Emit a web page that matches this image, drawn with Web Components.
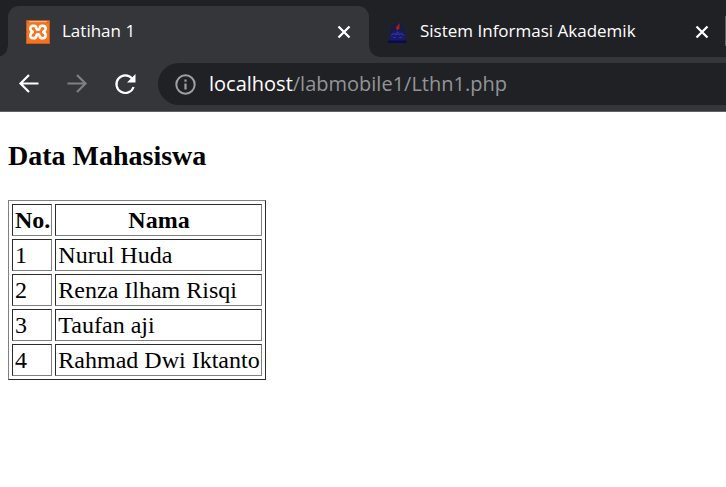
<!DOCTYPE html>
<html lang="id">
<head>
<meta charset="utf-8">
<title>Latihan 1</title>
<style>
  body { margin: 0; background: #fff; }
</style>
</head>
<body>
<browser-window>
  <browser-tab slot="tab" active><xampp-icon slot="icon"></xampp-icon>Latihan 1</browser-tab>
  <browser-tab slot="tab"><campus-icon slot="icon"></campus-icon>Sistem Informasi Akademik</browser-tab>
  <browser-toolbar slot="toolbar" host="localhost" path="/labmobile1/Lthn1.php"></browser-toolbar>
  <student-page></student-page>
</browser-window>

<script>
class BaseElement extends HTMLElement {
  constructor() {
    super();
    this.attachShadow({ mode: 'open' }).innerHTML = this.constructor.markup;
  }
}

customElements.define('browser-window', class extends BaseElement {
  static markup = `
    <style>
      :host { display: block; font-family: "Open Sans", "Noto Sans", sans-serif; }
      nav { display: grid; grid-template-columns: 361fr 356fr 1px; align-items: end;
            background: #202124; padding: 6px 0 0 8px; }
      nav::after { content: ""; height: 30px; background: #5f6368; align-self: center; margin-bottom: 1px; }
    </style>
    <nav aria-label="Tab"><slot name="tab"></slot></nav>
    <slot name="toolbar"></slot>
    <slot></slot>`;
});

customElements.define('browser-tab', class extends BaseElement {
  static markup = `
    <style>
      :host { display: flex; align-items: center; gap: 12px; height: 51px; min-width: 0;
              box-sizing: border-box; padding: 0 14px 0 18px; color: #fff;
              font-size: 17px; line-height: 24px; position: relative; }
      :host([active]) { background: #35363a; border-radius: 11px 11px 0 0; padding-right: 16px; }
      :host([active])::before, :host([active])::after {
        content: ""; position: absolute; bottom: 0; width: 10px; height: 10px; }
      :host([active])::before { right: 100%; background: radial-gradient(circle at 0 0, #0000 9px, #35363a 10px); }
      :host([active])::after { left: 100%; background: radial-gradient(circle at 100% 0, #0000 9px, #35363a 10px); }
      .title { flex: 1; min-width: 0; overflow: hidden; white-space: nowrap; padding-bottom: 2px; }
      button { display: flex; padding: 2px; border: 0; background: none; color: #fff; }
      svg { display: block; }
    </style>
    <slot name="icon"></slot>
    <span class="title"><slot></slot></span>
    <button aria-label="Tutup tab"><svg width="14" height="14" viewBox="0 0 14 14"><path d="M1.500 1.500l11 11M12.500 1.500l-11 11" stroke="currentColor" stroke-width="2.300"/></svg></button>`;
});

customElements.define('xampp-icon', class extends BaseElement {
  static markup = `
    <style>:host { display: block; flex: none; } svg { display: block; }</style>
    <svg width="24" height="24" viewBox="0 0 24 24" aria-hidden="true">
      <defs><linearGradient id="g" x2="0" y2="1"><stop stop-color="#d66a2b"/><stop offset=".2" stop-color="#f47b25"/><stop offset="1" stop-color="#f9701c"/></linearGradient></defs>
      <rect width="24" height="24" rx="1.5" fill="url(#g)"/>
      <rect x=".5" y=".5" width="23" height="23" rx="1" fill="none" stroke="#c95b20"/>
      <path d="M3 1.700h18" stroke="#fbc49b"/>
      <path d="M12 9.800c-1.600 0-1.400-.8-1.600-1.800C10 4.800 4.300 5 4.300 8.600c0 1.700 1 2.600 2.500 3.400-1.500.8-2.500 1.700-2.500 3.400 0 3.600 5.700 3.800 6.100.6.200-1 0-1.800 1.600-1.800s1.400.8 1.600 1.800c.4 3.200 6.100 3 6.100-.6 0-1.700-1-2.600-2.500-3.400 1.500-.8 2.500-1.700 2.500-3.400 0-3.600-5.700-3.800-6.100-.6-.2 1 0 1.800-1.600 1.800z" fill="none" stroke="#fff" stroke-width="2.600" stroke-linejoin="round"/>
    </svg>`;
});

customElements.define('campus-icon', class extends BaseElement {
  static markup = `
    <style>:host { display: block; flex: none; } svg { display: block; }</style>
    <svg width="21" height="24" viewBox="0 0 21 24" aria-hidden="true">
      <circle cx="10.500" cy="11.500" r="9" fill="#1b1c38" stroke="#212242" stroke-width="1.500" stroke-dasharray="2 1"/>
      <path d="M3.500 20v-6l3-3 4-1.500 4 1.500 3 3v6z" fill="#181870"/>
      <path d="M1 20.500h18.500v2.500H1z" fill="#09095c"/>
      <path d="M4 15.500l2.500-2 2 1 2-2.500 2 2.500 2-1 2.500 2M6 17.500h3m3 0h3M8 14.500h5" fill="none" stroke="#30338a" stroke-width="1.200"/>
      <path d="M10 10c-2-2-.5-3.500.5-4.500L12.500 3v5.500L11 10z" fill="#9c2024"/>
    </svg>`;
});

customElements.define('browser-toolbar', class extends BaseElement {
  static markup = `
    <style>
      :host { display: flex; align-items: center; padding: 6px 0; background: #35363a; border-bottom: 1px solid #5f6368; }
      .nav { display: flex; gap: 24px; padding: 0 21px 0 17px; }
      button { display: flex; padding: 0; border: 0; background: none; color: #fff; }
      button:disabled { color: #7f8083; }
      svg { display: block; flex: none; }
      form { flex: 1; min-width: 0; display: flex; align-items: center; gap: 12px; height: 42px;
             padding-left: 16px; border-radius: 21px 0 0 21px; background: #202124; color: #9aa0a6; }
      .address { flex: 1; font-size: 20px; line-height: 28px; white-space: nowrap; overflow: hidden; color: #929598; outline: 0; }
      .host { color: #fff; }
    </style>
    <div class="nav">
      <button aria-label="Kembali"><svg width="24" height="24" viewBox="0 0 24 24"><path d="M21.500 11.500H3.500M12 3l-8.500 8.500L12 20" fill="none" stroke="currentColor" stroke-width="2.200"/></svg></button>
      <button aria-label="Maju" disabled><svg width="24" height="24" viewBox="0 0 24 24"><path d="M2.500 11.500h18M12 3l8.500 8.500L12 20" fill="none" stroke="currentColor" stroke-width="2.200"/></svg></button>
      <button aria-label="Muat ulang"><svg width="24" height="24" viewBox="0 0 24 24"><path d="M20.600 15a8.800 8.800 0 1 1-1.500-8.400" fill="none" stroke="currentColor" stroke-width="2.200"/><path d="M22.500 2v8.500H14z" fill="currentColor"/></svg></button>
    </div>
    <form>
      <svg width="23" height="23" viewBox="0 0 23 23" aria-hidden="true"><circle cx="11.500" cy="11.500" r="9.200" fill="none" stroke="currentColor" stroke-width="2"/><path d="M11.500 10.500v6M11.500 6.500v2.300" stroke="currentColor" stroke-width="2.200"/></svg>
      <div class="address" role="textbox" contenteditable="true" spellcheck="false" aria-label="Alamat"><span class="host"></span><span class="path"></span></div>
    </form>`;
  connectedCallback() {
    this.shadowRoot.querySelector('.host').textContent = this.getAttribute('host');
    this.shadowRoot.querySelector('.path').textContent = this.getAttribute('path');
  }
});

customElements.define('student-page', class extends BaseElement {
  static markup = `
    <style>
      :host { display: block; padding: 28px 8px; color: #000; font-family: "Liberation Serif", "Times New Roman", serif; }
      h3 { margin: 0 0 28px; font-size: 28px; line-height: 32px; }
      table { border: 1px solid; border-color: #808080 #2c2c2c #2c2c2c #808080; border-spacing: 3px; font-size: 24px; line-height: 28px; }
      th, td { border: 1px solid; border-color: #2c2c2c #808080 #808080 #2c2c2c; padding: 1px 1px 1px 2px; }
    </style>
    <h3>Data Mahasiswa</h3>
    <table>
      <thead><tr><th>No.</th><th>Nama</th></tr></thead>
      <tbody>
        <tr><td>1</td><td>Nurul Huda</td></tr>
        <tr><td>2</td><td>Renza Ilham Risqi</td></tr>
        <tr><td>3</td><td>Taufan aji</td></tr>
        <tr><td>4</td><td>Rahmad Dwi Iktanto</td></tr>
      </tbody>
    </table>`;
});
</script>
</body>
</html>
